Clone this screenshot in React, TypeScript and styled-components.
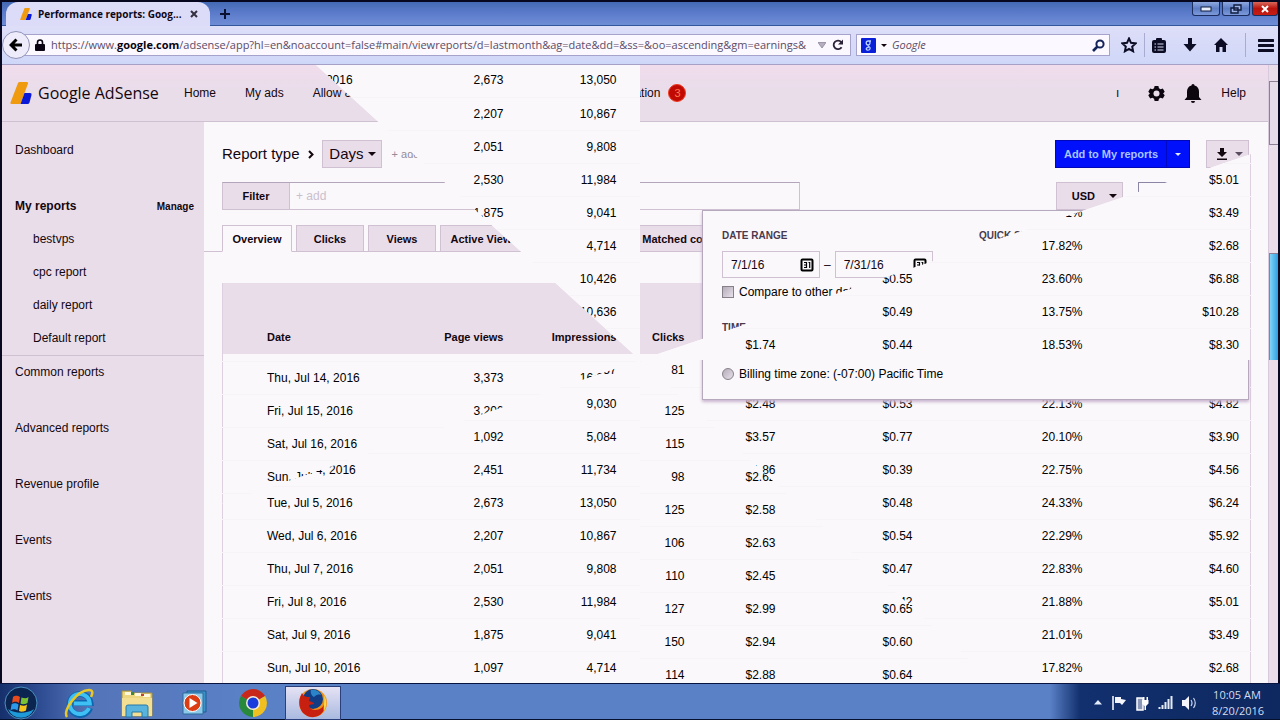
import React from "react";
import styled, { createGlobalStyle, css } from "styled-components";

const ink = "#14060f";
const mauve = "#e9ddea";
const paper = "#faf8fb";
const line = "#cfc0d2";
const uiFont = '"Open Sans", "Noto Sans", sans-serif';

const GlobalStyle = createGlobalStyle`
  * { box-sizing: border-box; }
  html, body, #root { height: 100%; }
  body {
    margin: 0;
    overflow: hidden;
    background: #05051c;
    color: ${ink};
    font: 12px/16px "Liberation Sans", Arial, sans-serif;
  }
  button, input { font: inherit; color: inherit; margin: 0; }
  button { padding: 0; border: 0; background: none; }
  a { color: inherit; text-decoration: none; }
  ul { list-style: none; margin: 0; padding: 0; }
  svg { display: block; flex: none; }
`;

const Desktop = styled.div`
  display: flex;
  flex-direction: column;
  height: 100vh;
  overflow: hidden;
`;

const BrowserWindow = styled.div`
  flex: 1;
  min-height: 0;
  display: flex;
  flex-direction: column;
  border: solid #07071f;
  border-width: 2px 2px 0 2px;
`;

/* ---------- browser chrome ---------- */

const TabStrip = styled.div`
  height: 24px;
  display: flex;
  align-items: stretch;
  background: linear-gradient(#4469b4, #5c7ccb 50%, #6f8cd6);
  border-bottom: 1px solid #34569a;
`;

const BrowserTab = styled.div`
  position: relative;
  display: flex;
  align-items: center;
  gap: 6px;
  width: 204px;
  margin: 0 0 -1px 4px;
  padding: 0 12px 0 14px;
  background: #dcdcf8;
  border-radius: 12px 12px 0 0;
  font: bold 10px/16px ${uiFont};
  color: #100818;
`;

const TabTitle = styled.span`
  flex: 1;
  white-space: nowrap;
`;

const NewTab = styled.button`
  width: 30px;
  display: grid;
  place-items: center;
`;

const WindowButtons = styled.div`
  margin-left: auto;
  display: flex;
  gap: 2px;
  align-items: flex-start;
`;

const WindowButton = styled.button<{ $close?: boolean }>`
  width: ${(p) => (p.$close ? 26 : 28)}px;
  height: 14px;
  display: grid;
  place-items: center;
  border: 1px solid #1b2c5e;
  border-top: 0;
  border-radius: 0 0 3px 3px;
  background: ${(p) =>
    p.$close
      ? "linear-gradient(#d8685a, #b8140e 50%, #c81c14)"
      : "linear-gradient(#8ea9e0, #5c7cc4 50%, #7c9ada)"};
`;

const Toolbar = styled.div`
  height: 39px;
  display: flex;
  align-items: center;
  padding: 0 4px 0 0;
  background: linear-gradient(#dedef8, #cfd7f8);
  border-bottom: 1px solid #a7a0c6;
`;

const BackButton = styled.button`
  position: relative;
  width: 28px;
  height: 28px;
  display: grid;
  place-items: center;
  border: 1px solid #8f93b8;
  border-radius: 50%;
  background: #eeebfb;
  flex: none;
`;

const fieldBox = css`
  display: flex;
  align-items: center;
  height: 22px;
  background: #fbf8ff;
  border: 1px solid #a5a3cc;
  font: 11px/16px ${uiFont};
`;

const AddressBar = styled.div`
  ${fieldBox}
  flex: 1;
  min-width: 0;
  margin-left: -6px;
  padding: 0 6px 0 11px;
  border-left: 0;
  gap: 6px;
  color: #5b4c66;
`;

const Address = styled.div`
  flex: 1;
  min-width: 0;
  white-space: nowrap;
  b { color: #080410; }
`;

const SearchBox = styled.label`
  ${fieldBox}
  width: 254px;
  margin-left: 5px;
  padding: 0 4px;
  gap: 5px;
  input {
    flex: 1;
    min-width: 0;
    border: 0;
    padding: 0;
    background: none;
    font-style: italic;
    outline: none;
  }
  input::placeholder { color: #5b4c66; opacity: 1; }
`;

const ToolbarIcons = styled.div`
  display: flex;
  align-items: center;
  gap: 17px;
  margin-left: 11px;
`;

const IconPair = styled.div<{ $gap: number }>`
  display: flex;
  align-items: center;
  gap: ${(p) => p.$gap}px;
`;

const IconButton = styled.button`
  display: grid;
  place-items: center;
`;

const Rule = styled.span`
  width: 1px;
  height: 24px;
  background: #a9acd0;
`;

/* ---------- page ---------- */

const Page = styled.div`
  position: relative;
  flex: 1;
  min-height: 0;
  display: flex;
  background: ${paper};
  overflow: hidden;
`;

const PageBody = styled.div`
  flex: 1;
  min-width: 0;
  display: flex;
  flex-direction: column;
`;

const TopBar = styled.header`
  height: 57px;
  display: flex;
  align-items: center;
  padding: 0 22px 0 8px;
  background: linear-gradient(#f0dcec, ${mauve} 50%);
  border-bottom: 1px solid ${line};
`;

const Brand = styled.a`
  display: flex;
  align-items: center;
  gap: 6px;
  width: 174px;
  font: 16px/20px "Open Sans", sans-serif;
  white-space: nowrap;
`;

const Nav = styled.nav`
  display: flex;
  gap: 29px;
  white-space: nowrap;
`;

const NavLink = styled.a<{ $before?: number }>`
  margin-left: ${(p) => p.$before ?? 0}px;
`;

const Alert = styled.span`
  width: 18px;
  height: 18px;
  margin-left: 8px;
  border: 1px solid #f03a20;
  border-radius: 50%;
  background: #c00a04;
  color: #ff7a50;
  text-align: center;
  font-size: 11px;
`;

const TopTools = styled.div`
  margin-left: auto;
  display: flex;
  align-items: center;
  gap: 19px;
`;

const Account = styled.button`
  margin-right: 10px;
`;

const Columns = styled.div`
  flex: 1;
  min-height: 0;
  display: flex;
`;

const Sidebar = styled.aside`
  width: 202px;
  flex: none;
  padding-top: 12px;
  background: ${mauve};
`;

const SideList = styled.ul`
  display: flex;
  flex-direction: column;
  gap: 23px;
`;

const SideLink = styled.a`
  display: block;
  padding-left: 13px;
  line-height: 33px;
`;

const SideGroup = styled.li`
  margin-bottom: -23px;
  border-bottom: 1px solid ${line};
`;

const SideHeading = styled.div`
  display: flex;
  justify-content: space-between;
  padding: 0 10px 0 13px;
  line-height: 33px;
  font-weight: bold;
  a { font-size: 10px; }
`;

const SubLink = styled(SideLink)`
  padding-left: 31px;
`;

const Main = styled.main`
  flex: 1;
  min-width: 0;
  overflow: hidden;
`;

const ReportBar = styled.div`
  display: flex;
  align-items: center;
  height: 28px;
  margin: 18px 19px 0 18px;
  font-size: 15px;
`;

const Chevron = styled.span`
  width: 22px;
  display: grid;
  place-items: center;
`;

const SoftButton = styled.button<{ $width: number; $size?: number; $gap?: number }>`
  width: ${(p) => p.$width}px;
  height: 28px;
  display: flex;
  align-items: center;
  justify-content: flex-end;
  padding-right: 5px;
  gap: ${(p) => p.$gap ?? 4}px;
  border: 1px solid ${line};
  background: ${mauve};
  font-size: ${(p) => p.$size ?? 15}px;
`;

const Hint = styled.span<{ $pale?: boolean }>`
  margin-left: ${(p) => (p.$pale ? 6 : 10)}px;
  font-size: ${(p) => (p.$pale ? 12 : 11)}px;
  color: ${(p) => (p.$pale ? "#cbbfce" : "#968c9a")};
`;

const PrimaryButton = styled.button`
  display: flex;
  align-items: stretch;
  height: 28px;
  margin-left: auto;
  margin-right: 16px;
  border: 1px solid #0007b8;
  background: #0010fa;
  color: #a9c4ff;
  font-size: 11px;
  font-weight: bold;
  line-height: 26px;
`;

const PrimaryText = styled.span`
  width: 110px;
  text-align: center;
`;

const PrimaryArrow = styled.span`
  width: 23px;
  display: grid;
  place-items: center;
  border-left: 1px solid #0008c4;
`;

const FilterBar = styled.div`
  display: flex;
  height: 28px;
  margin: 14px 19px 0 18px;
`;

const FilterField = styled.div`
  width: 578px;
  display: flex;
  align-items: center;
  border: 1px solid ${line};
  border-top-color: #b3a5bb;
`;

const FilterLabel = styled.span`
  width: 67px;
  line-height: 26px;
  text-align: center;
  background: ${mauve};
  border-right: 1px solid ${line};
  font-size: 11px;
  font-weight: bold;
`;

const CurrencySlot = styled.div`
  display: flex;
  gap: 15px;
  margin-left: auto;
  button { font-weight: bold; }
`;

const RangeButton = styled.button`
  width: 111px;
  border: 1px solid #8b86a6;
  background: ${paper};
`;

const Tabs = styled.div`
  display: flex;
  gap: 4px;
  height: 27px;
  margin-top: 15px;
  padding-left: 18px;
  border-bottom: 1px solid ${line};
`;

const Tab = styled.button<{ $width: number; $active?: boolean }>`
  width: ${(p) => p.$width}px;
  height: 27px;
  flex: none;
  border: 1px solid ${line};
  border-bottom-color: ${(p) => (p.$active ? paper : line)};
  background: ${(p) => (p.$active ? paper : mauve)};
  font-size: 11px;
  font-weight: bold;
  white-space: nowrap;
`;

/* ---------- report table ---------- */

const Sheet = styled.div`
  margin: 31px 19px 0 18px;
`;

const Table = styled.table`
  width: 100%;
  table-layout: fixed;
  border-collapse: collapse;
  border: solid #ddd0e0;
  border-width: 0 1px;
  background: ${paper};
`;

const HeadCell = styled.th`
  height: 71px;
  padding: 37px 11px 0 0;
  background: ${mauve};
  font-size: 11px;
  text-align: right;
  white-space: nowrap;
  &:first-child { text-align: left; padding-left: 44px; }
`;

const Cell = styled.td`
  height: 33px;
  padding: 0 11px 0 0;
  text-align: right;
  white-space: nowrap;
  color: #000;
  border-bottom: 1px solid #f7f4f8;
  &:first-child { text-align: left; padding: 0 0 0 44px; }
`;

const widths = [178, 114, 113, 68, 91, 137, 170, 157];
const headings = ["Date", "Page views", "Impressions", "Clicks", "", "", "", ""];

const firstDays: string[][] = [
  ["", "", "8,057", "81", "", "", "", ""],
  ["", "", "9,030", "", "$2.48", "$0.53", "22.13%", "$4.82"],
  ["", "1,092", "5,084", "", "$3.57", "$0.77", "20.10%", "$3.90"],
  ["Mon, Jul 4, 2016", "2,451", "11,734", "", "$1.86", "$0.39", "22.75%", "$4.56"],
  ["Tue, Jul 5, 2016", "2,673", "13,050", "", "", "$0.48", "24.33%", "$6.24"],
  ["Wed, Jul 6, 2016", "2,207", "10,867", "", "", "$0.54", "22.29%", "$5.92"],
  ["Thu, Jul 7, 2016", "2,051", "9,808", "", "", "$0.47", "22.83%", "$4.60"],
  ["Fri, Jul 8, 2016", "2,530", "11,984", "", "", "$0.42", "21.88%", "$5.01"],
  ["Sat, Jul 9, 2016", "1,875", "9,041", "", "", "", "21.01%", "$3.49"],
  ["Sun, Jul 10, 2016", "1,097", "4,714", "", "", "", "17.82%", "$2.68"],
];

const laterDays: string[][] = [
  ["Tue, Jul 5, 2016", "2,673", "13,050", "", "", "", "", ""],
  ["", "2,207", "10,867", "", "", "", "", ""],
  ["", "2,051", "9,808", "", "", "", "", ""],
  ["", "2,530", "11,984", "", "", "", "", "$5.01"],
  ["", "1,875", "9,041", "", "", "", "21.01%", "$3.49"],
  ["", "", "4,714", "", "", "", "17.82%", "$2.68"],
  ["", "", "10,426", "", "", "$0.55", "23.60%", "$6.88"],
  ["", "", "10,636", "", "", "$0.49", "13.75%", "$10.28"],
  ["", "", "", "", "$1.74", "$0.44", "18.53%", "$8.30"],
  ["Thu, Jul 14, 2016", "3,373", "16,997", "", "", "", "", ""],
  ["Fri, Jul 15, 2016", "3,206", "", "125", "", "", "", ""],
  ["Sat, Jul 16, 2016", "", "", "115", "", "", "", ""],
  ["Sun, Jul 17, 2016", "", "", "98", "$2.62", "", "", ""],
  ["", "", "", "125", "$2.58", "", "", ""],
  ["", "", "", "106", "$2.63", "", "", ""],
  ["", "", "", "110", "$2.45", "", "", ""],
  ["", "", "", "127", "$2.99", "$0.65", "", ""],
  ["", "", "", "150", "$2.94", "$0.60", "", ""],
  ["", "", "", "114", "$2.88", "$0.64", "", ""],
];

function ReportTable({ rows, head }: { rows: string[][]; head?: boolean }) {
  return (
    <Table>
      <colgroup>
        {widths.map((w, i) => (
          <col key={i} width={w} />
        ))}
      </colgroup>
      {head && (
        <thead>
          <tr>
            {headings.map((h, i) => (
              <HeadCell key={i} scope="col">{h}</HeadCell>
            ))}
          </tr>
        </thead>
      )}
      <tbody>
        {rows.map((r, n) => (
          <tr key={n}>
            {r.map((v, i) => (
              <Cell key={i}>{v}</Cell>
            ))}
          </tr>
        ))}
      </tbody>
    </Table>
  );
}

/* ---------- date range popup ---------- */

const Popup = styled.section`
  position: absolute;
  top: 145px;
  right: 29px;
  width: 547px;
  height: 190px;
  padding: 17px 19px;
  background: ${paper};
  border: 1px solid #b7a9bd;
  box-shadow: 0 2px 3px #c9b4cf;
`;

const PopupHeads = styled.div`
  display: flex;
  height: 20px;
  font-size: 10px;
  font-weight: bold;
  color: #4a3a4e;
  span { width: 257px; flex: none; }
`;

const DateRow = styled.div`
  display: flex;
  align-items: center;
  gap: 4px;
  margin-top: 3px;
`;

const DateBox = styled.label`
  width: 98px;
  height: 27px;
  display: flex;
  align-items: center;
  justify-content: space-between;
  padding: 0 5px 0 8px;
  border: 1px solid ${line};
  input {
    width: 60px;
    border: 0;
    padding: 0;
    background: none;
    outline: none;
  }
`;

const Choice = styled.label`
  display: flex;
  align-items: center;
  gap: 5px;
  margin-top: 6px;
  color: #000;
  input {
    appearance: none;
    width: 12px;
    height: 12px;
    border: 1px solid #86808a;
    background: linear-gradient(135deg, #b4acb8, #e8e0ea);
  }
  input[type="radio"] { border-radius: 50%; }
`;

const ZoneHead = styled(PopupHeads)`
  margin-top: 20px;
  height: 40px;
`;

/* ---------- scroll bar and wipe ---------- */

const Scrollbar = styled.div<{ $gap: number }>`
  width: 10px;
  flex: none;
  padding-top: ${(p) => p.$gap}px;
  background: ${mauve};
  border-left: 1px solid #d8cadc;
`;

const Thumb = styled.div<{ $hot?: boolean }>`
  height: ${(p) => (p.$hot ? 190 : 64)}px;
  border: 1px solid #8d7f96;
  border-right: 0;
  background: ${(p) => (p.$hot ? "linear-gradient(90deg, #7fd4f6, #2f9ee4)" : "#e6dce9")};
`;

const Wipe = styled.div`
  position: absolute;
  inset: 0;
  display: flex;
  padding-left: 202px;
  background: ${paper};
  overflow: hidden;
  clip-path: polygon(
    314px 0, 50% 0, 50% 295px,
    100% 80px, 100% 295px, 50% 295px,
    calc(50% + 355px) 100%, 50% 100%, 50% 295px,
    202px 445px, 202px 295px, 50% 295px
  );
`;

const Scrolled = styled.div`
  flex: 1;
  min-width: 0;
  margin: -1px 19px 0 18px;
`;

/* ---------- taskbar ---------- */

const Taskbar = styled.footer`
  height: 37px;
  flex: none;
  display: flex;
  align-items: center;
  padding: 2px 18px 0 2px;
  border-top: 1px solid #0a1440;
  border-bottom: 1px solid #05102c;
  background: linear-gradient(90deg, #16306c, #2e4c92 40px, #5474b8 90px, #5a80c6 240px, #5a80c6 1050px, #12306e 1080px, #0e2860);
  color: #d4dcf0;
`;

const TaskButton = styled.button<{ $active?: boolean }>`
  width: ${(p) => (p.$active ? 56 : 58)}px;
  height: 34px;
  display: grid;
  place-items: center;
  ${(p) =>
    p.$active &&
    css`
      margin-left: 3px;
      border: 1px solid #2a3f7c;
      background: linear-gradient(#e6e2f4, #a9bae0);
    `}
`;

const StartButton = styled(TaskButton)`
  width: 38px;
  margin-right: 10px;
`;

const Tray = styled.div`
  margin-left: auto;
  display: flex;
  align-items: center;
  gap: 9px;
`;

const Clock = styled.time`
  width: 50px;
  margin-left: 6px;
  font: 11px/16px ${uiFont};
  text-align: center;
  white-space: nowrap;
`;

/* ---------- icons ---------- */

const Caret = ({ size = 8, fill = ink }: { size?: number; fill?: string }) => (
  <svg width={size} height={size / 2} viewBox="0 0 8 4"><path d="M0 0h8L4 4z" fill={fill} /></svg>
);

const AdLogo = ({ size }: { size: number }) => (
  <svg width={size} height={size} viewBox="0 0 22 22">
    <path d="M8 1q.5-1 1.500-1H17q1.500 0 1 1.500L10.500 22H1.500Q0 22 .5 20.500z" fill="#f09a10" />
    <path d="M14.500 11H20q2 0 1.500 2l-2 7.500q-.5 1.500-2 1.500h-7z" fill="#0a18d8" />
  </svg>
);

const Calendar = () => (
  <svg width="14" height="14" viewBox="0 0 14 14">
    <rect x="1.500" y="1.500" width="11" height="11" rx="1" fill="none" stroke="#000" strokeWidth="2" />
    <path d="M4 4.500h2.500v5H4M4 7h2.500M8.500 4.500h1.200V10" fill="none" stroke="#000" strokeWidth="1.200" />
  </svg>
);

export default function App() {
  return (
    <Desktop>
      <GlobalStyle />
      <BrowserWindow>
        <TabStrip>
          <BrowserTab>
            <AdLogo size={12} />
            <TabTitle>Performance reports: Goog...</TabTitle>
            <IconButton aria-label="Close tab">
              <svg width="8" height="8" viewBox="0 0 8 8"><path d="M1 1l6 6M7 1L1 7" stroke="#35303f" strokeWidth="2" /></svg>
            </IconButton>
          </BrowserTab>
          <NewTab aria-label="New tab">
            <svg width="10" height="10" viewBox="0 0 10 10"><path d="M5 0v10M0 5h10" stroke="#0a1030" strokeWidth="2" /></svg>
          </NewTab>
          <WindowButtons>
            <WindowButton aria-label="Minimize">
              <svg width="12" height="6" viewBox="0 0 12 6"><rect x="1" y="1" width="10" height="4" fill="#e8eefc" stroke="#101c40" /></svg>
            </WindowButton>
            <WindowButton aria-label="Restore">
              <svg width="12" height="10" viewBox="0 0 12 10"><path d="M4 1h7v5H4zM1 4h7v5H1z" fill="#9db4e6" stroke="#101c40" strokeWidth="1.4" /></svg>
            </WindowButton>
            <WindowButton $close aria-label="Close">
              <svg width="10" height="8" viewBox="0 0 10 8"><path d="M2 1l6 6M8 1L2 7" stroke="#fff" strokeWidth="2" /></svg>
            </WindowButton>
          </WindowButtons>
        </TabStrip>
        <Toolbar>
          <BackButton aria-label="Back">
            <svg width="14" height="14" viewBox="0 0 14 14"><path d="M7.500 1.500L2 7l5.500 5.500M2.500 7H13" fill="none" stroke="#000" strokeWidth="3" /></svg>
          </BackButton>
          <AddressBar>
            <svg width="10" height="12" viewBox="0 0 10 12"><path d="M2.500 6V3.500a2.500 2.500 0 015 0V6" fill="none" stroke="#0c0614" strokeWidth="1.600" /><rect y="5" width="10" height="7" rx="1" fill="#0c0614" /></svg>
            <Address>https://www.<b>google.com</b>/adsense/app?hl=en&amp;noaccount=false#main/viewreports/d=lastmonth&amp;ag=date&amp;dd=&amp;ss=&amp;oo=ascending&amp;gm=earnings&amp;</Address>
            <svg width="8" height="6" viewBox="0 0 8 6"><path d="M0 .5h8L4 6z" fill="#b5aec0" stroke="#8f889c" strokeWidth=".8" /></svg>
            <IconButton aria-label="Reload">
              <svg width="12" height="12" viewBox="0 0 12 12"><path d="M9.600 8.200A4.300 4.300 0 119.300 3.200" fill="none" stroke="#2b2238" strokeWidth="1.800" /><path d="M11 .5v5H6z" fill="#2b2238" /></svg>
            </IconButton>
          </AddressBar>
          <SearchBox>
            <svg width="15" height="15" viewBox="0 0 15 15"><rect width="15" height="15" rx="1" fill="#0a20d8" /><path d="M10 3H7.200a2 2 0 100 4c2.500 0 2-4 .8-4M7.300 7c-.8.8 0 1.200.9 1.800 1.600 1 1 3.400-1.200 3.400S4.300 9.500 7.800 9.400" fill="none" stroke="#b8d0ff" strokeWidth="1.300" /></svg>
            <Caret size={6} />
            <input aria-label="Search" placeholder="Google" />
            <svg width="13" height="13" viewBox="0 0 13 13"><circle cx="8" cy="5" r="3.600" fill="none" stroke="#14245a" strokeWidth="2" /><path d="M5.500 7.500L1 12" stroke="#14245a" strokeWidth="2.600" /></svg>
          </SearchBox>
          <ToolbarIcons>
            <IconPair $gap={7}>
              <IconButton aria-label="Bookmark this page">
                <svg width="16" height="16" viewBox="0 0 16 16"><path d="M8 1.500l2 4.300 4.700.6-3.500 3.200.9 4.700L8 12l-4.100 2.300.9-4.700L1.300 6.400 6 5.800z" fill="none" stroke="#0c0c24" strokeWidth="2" /></svg>
              </IconButton>
              <Rule />
              <IconButton aria-label="Bookmarks">
                <svg width="14" height="15" viewBox="0 0 14 15"><rect y="2" width="14" height="13" rx="2" fill="#0c0c24" /><rect x="4" width="6" height="4" rx="1" fill="#0c0c24" /><path d="M2.500 6h1.500M2.500 9h1.500M2.500 12h1.500M5.500 6H11.500M5.500 9H11.500M5.500 12H11.500" stroke="#d8dcf8" strokeWidth="1.200" /></svg>
              </IconButton>
            </IconPair>
            <IconButton aria-label="Downloads">
              <svg width="14" height="14" viewBox="0 0 14 14"><path d="M5 0h4v6h4.500L7 13.500.5 6H5z" fill="#0c0c24" /></svg>
            </IconButton>
            <IconButton aria-label="Home">
              <svg width="14" height="14" viewBox="0 0 14 14"><path d="M7 0l7 7h-2v7H8.500V9h-3v5H2V7H0z" fill="#0c0c24" /></svg>
            </IconButton>
            <IconPair $gap={12}>
              <Rule />
              <IconButton aria-label="Menu">
                <svg width="16" height="13" viewBox="0 0 16 13"><path d="M1 1.500h14M1 6.500h14M1 11.500h14" stroke="#0c0c24" strokeWidth="3" strokeLinecap="round" /></svg>
              </IconButton>
            </IconPair>
          </ToolbarIcons>
        </Toolbar>

        <Page>
          <PageBody>
            <TopBar>
              <Brand href="#">
                <AdLogo size={22} />
                <span>Google AdSense</span>
              </Brand>
              <Nav>
                <NavLink href="#">Home</NavLink>
                <NavLink href="#">My ads</NavLink>
                <NavLink href="#">Allow &amp; block ads</NavLink>
                <NavLink href="#" $before={158}>Optimization</NavLink>
              </Nav>
              <Alert>3</Alert>
              <TopTools>
                <Account>ı</Account>
                <IconButton aria-label="Settings">
                  <svg width="17" height="17" viewBox="0 0 18 18"><path d="M7 1h4l.6 2.400 1.700 1 2.400-.7 2 3.500L16 9l1.700 1.800-2 3.500-2.400-.7-1.700 1L11 17H7l-.6-2.400-1.700-1-2.400.7-2-3.500L2 9 .3 7.200l2-3.500 2.400.7 1.700-1z" fill="#0c060e" /><circle cx="9" cy="9" r="3.200" fill={mauve} /></svg>
                </IconButton>
                <IconButton aria-label="Notifications">
                  <svg width="18" height="19" viewBox="0 0 18 19"><path d="M9 0c1 0 1.500.8 1.500 1.500 3 .7 4.500 3 4.500 6V13l2.500 3H.5L3 13V7.500c0-3 1.500-5.300 4.500-6C7.500.8 8 0 9 0zM7 17h4a2 2 0 01-4 0z" fill="#0c060e" /></svg>
                </IconButton>
                <a href="#">Help</a>
              </TopTools>
            </TopBar>
            <Columns>
              <Sidebar>
                <SideList>
                  <li><SideLink href="#">Dashboard</SideLink></li>
                  <SideGroup>
                    <SideHeading>My reports<a href="#">Manage</a></SideHeading>
                    <ul>
                      {["bestvps", "cpc report", "daily report", "Default report"].map((t) => (
                        <li key={t}><SubLink href="#">{t}</SubLink></li>
                      ))}
                    </ul>
                  </SideGroup>
                  {["Common reports", "Advanced reports", "Revenue profile", "Events", "Events"].map((t, i) => (
                    <li key={i}><SideLink href="#">{t}</SideLink></li>
                  ))}
                </SideList>
              </Sidebar>
              <Main>
                <ReportBar>
                  Report type
                  <Chevron><svg width="6" height="9" viewBox="0 0 6 9"><path d="M1 1l3.500 3.500L1 8" fill="none" stroke={ink} strokeWidth="2" /></svg></Chevron>
                  <SoftButton $width={60}>Days<Caret /></SoftButton>
                  <Hint>+ add</Hint>
                  <PrimaryButton>
                    <PrimaryText>Add to My reports</PrimaryText>
                    <PrimaryArrow><Caret size={6} fill="#e4ecff" /></PrimaryArrow>
                  </PrimaryButton>
                  <SoftButton $width={43} $gap={7} aria-label="Download">
                    <svg width="12" height="12" viewBox="0 0 12 12"><path d="M4 0h4v4h3L6 9 1 4h3zM1 10.500h10v1.500H1z" fill={ink} /></svg>
                    <Caret fill="#5b4c60" />
                  </SoftButton>
                </ReportBar>
                <FilterBar>
                  <FilterField>
                    <FilterLabel>Filter</FilterLabel>
                    <Hint $pale>+ add</Hint>
                  </FilterField>
                  <CurrencySlot>
                    <SoftButton $width={67} $size={11} $gap={14}>USD<Caret /></SoftButton>
                    <RangeButton aria-label="Date range" />
                  </CurrencySlot>
                </FilterBar>
                <Tabs>
                  <Tab $width={70} $active>Overview</Tab>
                  <Tab $width={68}>Clicks</Tab>
                  <Tab $width={68}>Views</Tab>
                  <Tab $width={82}>Active View</Tab>
                  <Tab $width={96}>Ad requests</Tab>
                  <Tab $width={120}>Matched content</Tab>
                </Tabs>
                <Sheet>
                  <ReportTable rows={firstDays} head />
                </Sheet>
              </Main>
            </Columns>
          </PageBody>
          <Scrollbar $gap={16}><Thumb /></Scrollbar>

          <Popup>
            <PopupHeads><span>DATE RANGE</span><span>QUICK SELECT</span></PopupHeads>
            <DateRow>
              <DateBox><input aria-label="Start date" defaultValue="7/1/16" /><Calendar /></DateBox>
              –
              <DateBox><input aria-label="End date" defaultValue="7/31/16" /><Calendar /></DateBox>
            </DateRow>
            <Choice><input type="checkbox" />Compare to other dates</Choice>
            <ZoneHead>TIME ZONE</ZoneHead>
            <Choice><input type="radio" name="zone" />Billing time zone: (-07:00) Pacific Time</Choice>
          </Popup>

          <Wipe aria-hidden="true">
            <Scrolled>
              <ReportTable rows={laterDays} />
            </Scrolled>
            <Scrollbar $gap={188}><Thumb $hot /></Scrollbar>
          </Wipe>
        </Page>
      </BrowserWindow>

      <Taskbar>
        <StartButton aria-label="Start">
          <svg width="34" height="34" viewBox="0 0 34 34">
            <circle cx="17" cy="17" r="16" fill="#0c2450" stroke="#4a90c0" />
            <path d="M4 23a14 14 0 0026 0c-7 5-19 5-26 0z" fill="#1e9ad8" />
            <path d="M9 11c3-2 5-1 7 0l-1 6c-2-1-4-2-7 0z" fill="#e84a1c" />
            <path d="M17.500 11.500c3 1 5 1 7-.5l-1 6c-3 1.500-5 1.500-7 .5z" fill="#7cc034" />
            <path d="M7.500 18.500c3-2 5-1 7 0l-1 6c-2-1-4-2-7 0z" fill="#2c9ae8" />
            <path d="M16 19c3 1 5 1 7-.5l-1 6c-3 1.500-5 1.500-7 .5z" fill="#f8c41c" />
          </svg>
        </StartButton>
        <TaskButton aria-label="Internet Explorer">
          <svg width="30" height="30" viewBox="0 0 30 30">
            <path d="M26 20a10.500 10.500 0 11.500-5H10" fill="none" stroke="#0e66b0" strokeWidth="6" />
            <path d="M25 20a10 10 0 11.800-4.500H10" fill="none" stroke="#3ec0f4" strokeWidth="4" />
            <path d="M3 29C-2 22 14 2 25 2c4 0 4 3 2 7" fill="none" stroke="#e8c828" strokeWidth="2.500" />
          </svg>
        </TaskButton>
        <TaskButton aria-label="Explorer">
          <svg width="32" height="30" viewBox="0 0 32 30">
            <path d="M1 3h9l2 2h19v23H1z" fill="#ecd680" stroke="#a8903c" />
            <path d="M4 4h8v3H4zM14 5h6v3h-6zM22 6h7v3h-7z" fill="#fff8dc" />
            <path d="M10 4h3v3h-3z" fill="#3a8a3c" /><path d="M20 6h3v2h-3z" fill="#c8402c" />
            <path d="M1 10h30v18H1z" fill="#f2df94" />
            <path d="M5 29V19q0-2 2-2h18q2 0 2 2v10h-6v-5H11v5z" fill="#58b4dc" stroke="#2878a8" />
          </svg>
        </TaskButton>
        <TaskButton aria-label="Media Player">
          <svg width="26" height="26" viewBox="0 0 26 26">
            <path d="M5 1h19v21H5z" fill="#3a90c8" stroke="#1c5c90" />
            <path d="M1 3h20v21H1z" fill="#8cc8e8" stroke="#2a6c9c" />
            <circle cx="10.500" cy="13" r="8.500" fill="#dc3c14" stroke="#fff" />
            <path d="M7.500 8v10l8-5z" fill="#fff" />
          </svg>
        </TaskButton>
        <TaskButton aria-label="Chrome">
          <svg width="28" height="28" viewBox="0 0 28 28">
            <path d="M14 14L1.900 7A14 14 0 0126.100 7z" fill="#c8281c" />
            <path d="M14 14L26.100 7A14 14 0 0114 28z" fill="#f0c020" />
            <path d="M14 14v14A14 14 0 011.900 7z" fill="#28883c" />
            <circle cx="14" cy="14" r="7" fill="#f4ecdc" />
            <circle cx="14" cy="14" r="5.500" fill="#1a3cdc" />
          </svg>
        </TaskButton>
        <TaskButton $active aria-label="Firefox">
          <svg width="30" height="30" viewBox="0 0 30 30">
            <circle cx="15" cy="15" r="14" fill="#f09018" />
            <circle cx="15" cy="11" r="10" fill="#123c84" />
            <path d="M13 2c5-1 9 2 10 5-3-1-5 0-7 2-2-1-4-4-3-7z" fill="#2c84c8" />
            <path d="M3 7c-3 6-2 13 2 18 6 6 15 5 19 0 3-3 4-8 3-11-1 5-5 8-10 8-4 0-6-3-6-5l5-1c0-2-3-2-5-3l1-4C8 9 6 9 4 5z" fill="#c82010" />
            <path d="M26 7c3 5 3 11 0 16-1-2 1-10 0-16z" fill="#fcd848" />
          </svg>
        </TaskButton>
        <Tray>
          <svg width="8" height="5" viewBox="0 0 8 5"><path d="M0 4.500h8L4 0z" fill="#e4ecfc" /></svg>
          <svg width="16" height="16" viewBox="0 0 16 16"><path d="M2 1v14" stroke="#fff" strokeWidth="1.500" /><path d="M4 2h6v2l5 1-4 5-2-2H4z" fill="#f4f6fc" /></svg>
          <svg width="13" height="16" viewBox="0 0 13 16"><rect x="1" y="3" width="6" height="12" fill="#8c98b8" stroke="#fff" strokeWidth="1.500" /><path d="M6 5h6.500v3.500L10 11v4H8.500v-4L6 8.500zM7 2h1.500v3H7zM10.500 2H12v3h-1.500z" fill="#fff" /></svg>
          <svg width="15" height="13" viewBox="0 0 15 13"><path d="M1.500 13v-2M4.500 13v-4M7.500 13V6M10.500 13V3M13.500 13V0" stroke="#e4eaf8" strokeWidth="2" /></svg>
          <svg width="15" height="14" viewBox="0 0 15 14"><path d="M0 4h3l4-4v14l-4-4H0z" fill="#f4f6fc" /><path d="M9 4q2 3 0 6M11.500 2q3.500 5 0 10" fill="none" stroke="#c8d4ec" strokeWidth="1.200" /></svg>
          <Clock>10:05 AM<br />8/20/2016</Clock>
        </Tray>
      </Taskbar>
    </Desktop>
  );
}
